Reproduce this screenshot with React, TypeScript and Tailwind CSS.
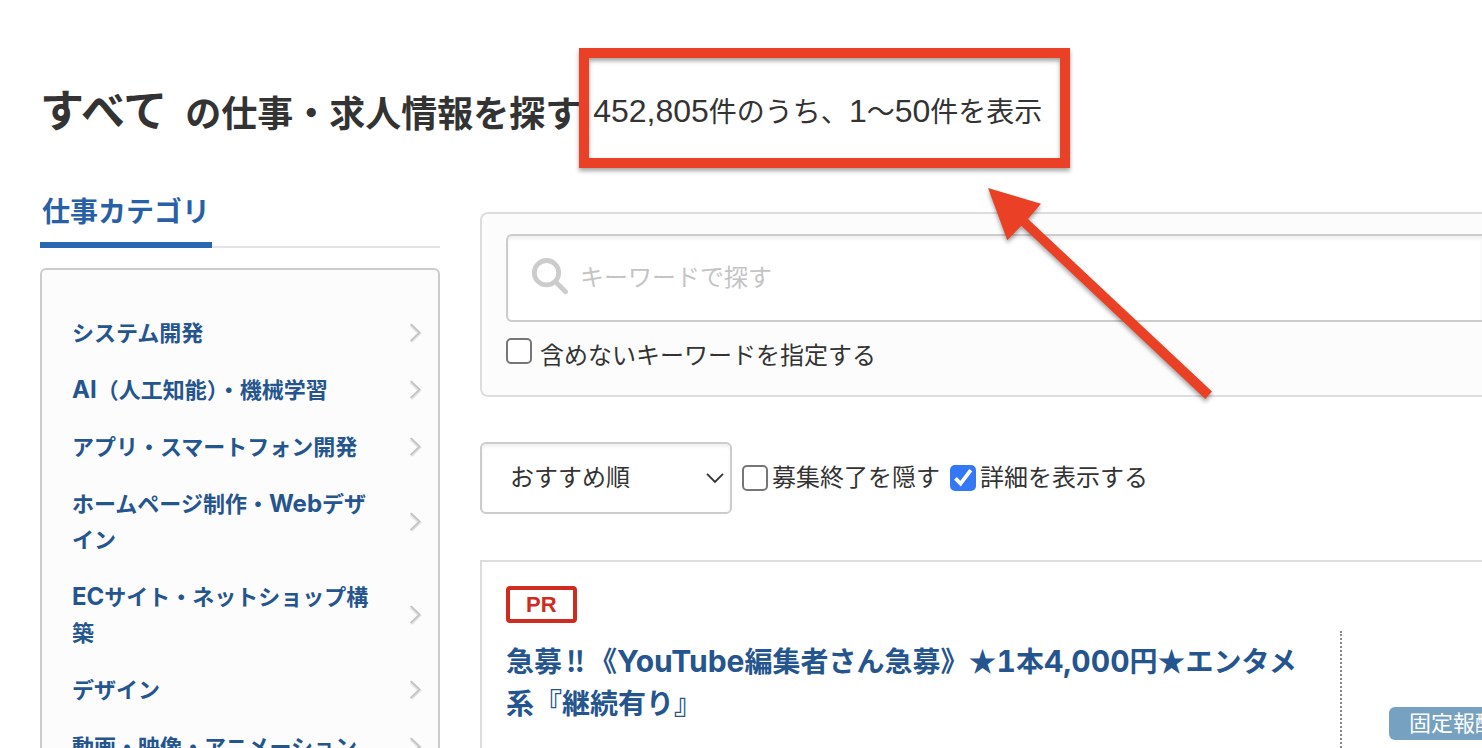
import React from "react";

function Latin({ children }: { children: React.ReactNode }) {
  return <span className="text-2xl leading-none">{children}</span>;
}

function TitleLatin({ children }: { children: React.ReactNode }) {
  return (
    <span className="font-['Inter',sans-serif] text-[30px] leading-none tabular-nums">{children}</span>
  );
}

function Count({ children }: { children: React.ReactNode }) {
  return <span className="font-['Liberation_Sans',sans-serif] text-[32px] leading-none">{children}</span>;
}

const categories: React.ReactNode[] = [
  "システム開発",
  <><Latin>AI</Latin>（人工知能）・機械学習</>,
  "アプリ・スマートフォン開発",
  <>ホームページ制作・<Latin>Web</Latin>デザイン</>,
  <><Latin>EC</Latin>サイト・ネットショップ構築</>,
  "デザイン",
  "動画・映像・アニメーション",
];

function ItemChevron() {
  return (
    <svg className="h-5 w-3 shrink-0" viewBox="0 0 12 20" fill="none" aria-hidden="true">
      <path d="M1 2 9.4 10.2 1 18.6" stroke="#e0e0e0" strokeWidth="3.4" />
      <path d="M0.6 1 9.6 9.6 0.6 18" stroke="#c0c0c0" strokeWidth="1.4" />
    </svg>
  );
}

function CheckBox({ id, defaultChecked }: { id: string; defaultChecked?: boolean }) {
  return (
    <span className="grid shrink-0">
      <input
        id={id}
        type="checkbox"
        defaultChecked={defaultChecked}
        className="peer col-start-1 row-start-1 size-[26px] appearance-none rounded-[5px] border-2 border-[#767676] bg-white checked:border-[#3478f6] checked:bg-[#3478f6]"
      />
      <svg
        className="pointer-events-none invisible col-start-1 row-start-1 size-[26px] peer-checked:visible"
        viewBox="0 0 26 26"
        fill="none"
        aria-hidden="true"
      >
        <path d="M5.4 13.4 10.6 18.6 20.8 5.2" stroke="#fff" strokeWidth="3.8" />
      </svg>
    </span>
  );
}

function Sidebar() {
  return (
    <aside className="w-[400px] shrink-0">
      <div className="flex items-end">
        <h2 className="border-b-[6px] border-[#2867b2] px-0.5 pb-3 text-[28px] leading-9 font-bold text-[#285fa7]">
          仕事カテゴリ
        </h2>
        <span className="flex-1 border-b-2 border-[#e4e4e4]" />
      </div>
      <nav className="mt-5 rounded-md border-2 border-[#ccc] bg-[#fcfcfc] pt-[35px] pb-8">
        <ul className="flex flex-col gap-px">
          {categories.map((name, index) => (
            <li key={index}>
              <a
                href="#"
                className="flex items-center justify-between py-2.5 pr-4 pl-[30px] text-[22px] leading-9 font-bold text-[#25558e]"
              >
                <span className="w-[300px]">{name}</span>
                <ItemChevron />
              </a>
            </li>
          ))}
        </ul>
      </nav>
    </aside>
  );
}

function SearchPanel() {
  return (
    <form className="rounded-l-lg border-2 border-r-0 border-[#ddd] bg-[#fcfcfc] pt-5 pb-[21px] pl-6">
      <label
        htmlFor="keyword"
        className="flex h-[88px] items-center gap-2.5 rounded-l-md border-2 border-r-0 border-[#ccc] bg-white pl-6 shadow-[inset_0_3px_3px_rgba(0,0,0,0.06)]"
      >
        <svg className="size-[38px] shrink-0 overflow-visible" viewBox="0 0 38 38" fill="none" aria-label="検索">
          <circle cx="14.5" cy="13.7" r="12.2" stroke="#ccc" strokeWidth="4.8" />
          <path d="M23.5 22.7 33.6 32.8" stroke="#ccc" strokeWidth="4.8" strokeLinecap="round" />
        </svg>
        <input
          id="keyword"
          type="text"
          placeholder="キーワードで探す"
          className="min-w-0 flex-1 bg-transparent text-2xl outline-none placeholder:text-[#c4c4c4]"
        />
      </label>
      <div className="mt-4 flex items-start gap-2">
        <CheckBox id="exclude" />
        <label htmlFor="exclude" className="text-2xl leading-9">
          含めないキーワードを指定する
        </label>
      </div>
    </form>
  );
}

function SortRow() {
  return (
    <div className="mt-[45px] flex items-center">
      <div className="grid w-[252px] items-center">
        <select
          aria-label="並び順"
          className="col-start-1 row-start-1 h-[72px] appearance-none rounded-md border-2 border-[#ccc] bg-white pl-7 text-2xl shadow-[inset_0_3px_3px_rgba(0,0,0,0.06)]"
        >
          <option>おすすめ順</option>
        </select>
        <svg
          className="pointer-events-none col-start-1 row-start-1 mr-2 h-3 w-[18px] justify-self-end"
          viewBox="0 0 18 12"
          fill="none"
          aria-hidden="true"
        >
          <path d="M1 1.8 9 10 17 1.8" stroke="#333" strokeWidth="1.8" />
        </svg>
      </div>
      <div className="ml-2.5 flex items-center gap-1">
        <CheckBox id="hide-closed" />
        <label htmlFor="hide-closed" className="text-2xl leading-9">
          募集終了を隠す
        </label>
      </div>
      <div className="ml-2.5 flex items-center gap-1">
        <CheckBox id="show-detail" defaultChecked />
        <label htmlFor="show-detail" className="text-2xl leading-9">
          詳細を表示する
        </label>
      </div>
    </div>
  );
}

function JobCard() {
  return (
    <article className="mt-[46px] flex border-2 border-r-0 border-b-0 border-[#ddd] pt-6 pl-6">
      <div className="min-w-0 flex-1 pr-6">
        <span className="inline-block rounded border-4 border-[#d02b1f] px-4 font-['Liberation_Sans',sans-serif] text-[22px] leading-[29px] font-bold text-[#d02b1f]">
          PR
        </span>
        <h3 className="mt-4 font-['Noto_Sans_CJK_JP',sans-serif] text-[28px] leading-[42px] font-bold">
          <a href="#" className="text-[#25558e]">
            急募<span className="px-1">‼</span>《<TitleLatin>YouTube</TitleLatin>編集者さん急募》★
            <TitleLatin>1</TitleLatin>本<TitleLatin>4,000</TitleLatin>円★エンタメ系『継続有り』
          </a>
        </h3>
      </div>
      <div className="mt-[45px] w-[142px] shrink-0 overflow-hidden border-l-2 border-dotted border-[#888] pt-[76px] pb-10 pl-[47px]">
        <span className="inline-block rounded-md bg-[#76a1c1] px-5 text-[22px] leading-[33px] whitespace-nowrap text-white">
          固定報酬制
        </span>
      </div>
    </article>
  );
}

export default function App() {
  return (
    <div className="relative h-screen overflow-hidden bg-white pl-10 font-['Inter','Noto_Sans_CJK_JP',sans-serif] text-[#333]">
      <header className="mt-20 flex h-16 items-center whitespace-nowrap">
        <h1 className="flex items-baseline gap-[18px] text-4xl leading-[64px] font-bold">
          <span className="text-[44px]">すべて</span>
          <span>の仕事・求人情報を探す</span>
        </h1>
        <p className="relative ml-3 text-[28px] leading-[64px]">
          <Count>452,805</Count>件のうち、<Count>1</Count>〜<Count>50</Count>件を表示
          <span className="absolute -top-8 -right-7 -bottom-6 -left-3.5 border-[10px] border-[#ea4126] drop-shadow-[0_3px_2px_rgba(0,0,0,0.35)]" />
        </p>
      </header>

      <div className="flex gap-10 pt-[50px]">
        <Sidebar />
        <main className="min-w-0 flex-1 pt-[18px]">
          <SearchPanel />
          <SortRow />
          <JobCard />
        </main>
      </div>

      <svg
        className="pointer-events-none absolute top-[180px] left-[980px] h-[230px] w-[240px] drop-shadow-[0_3px_2px_rgba(0,0,0,0.35)]"
        viewBox="980 180 240 230"
        aria-hidden="true"
      >
        <path
          d="M988 188 1041 203.7 1028 219 1212 391.5 1205.3 399 1021.3 225.7 1007.3 240.3Z"
          fill="#ea4126"
        />
      </svg>
    </div>
  );
}
